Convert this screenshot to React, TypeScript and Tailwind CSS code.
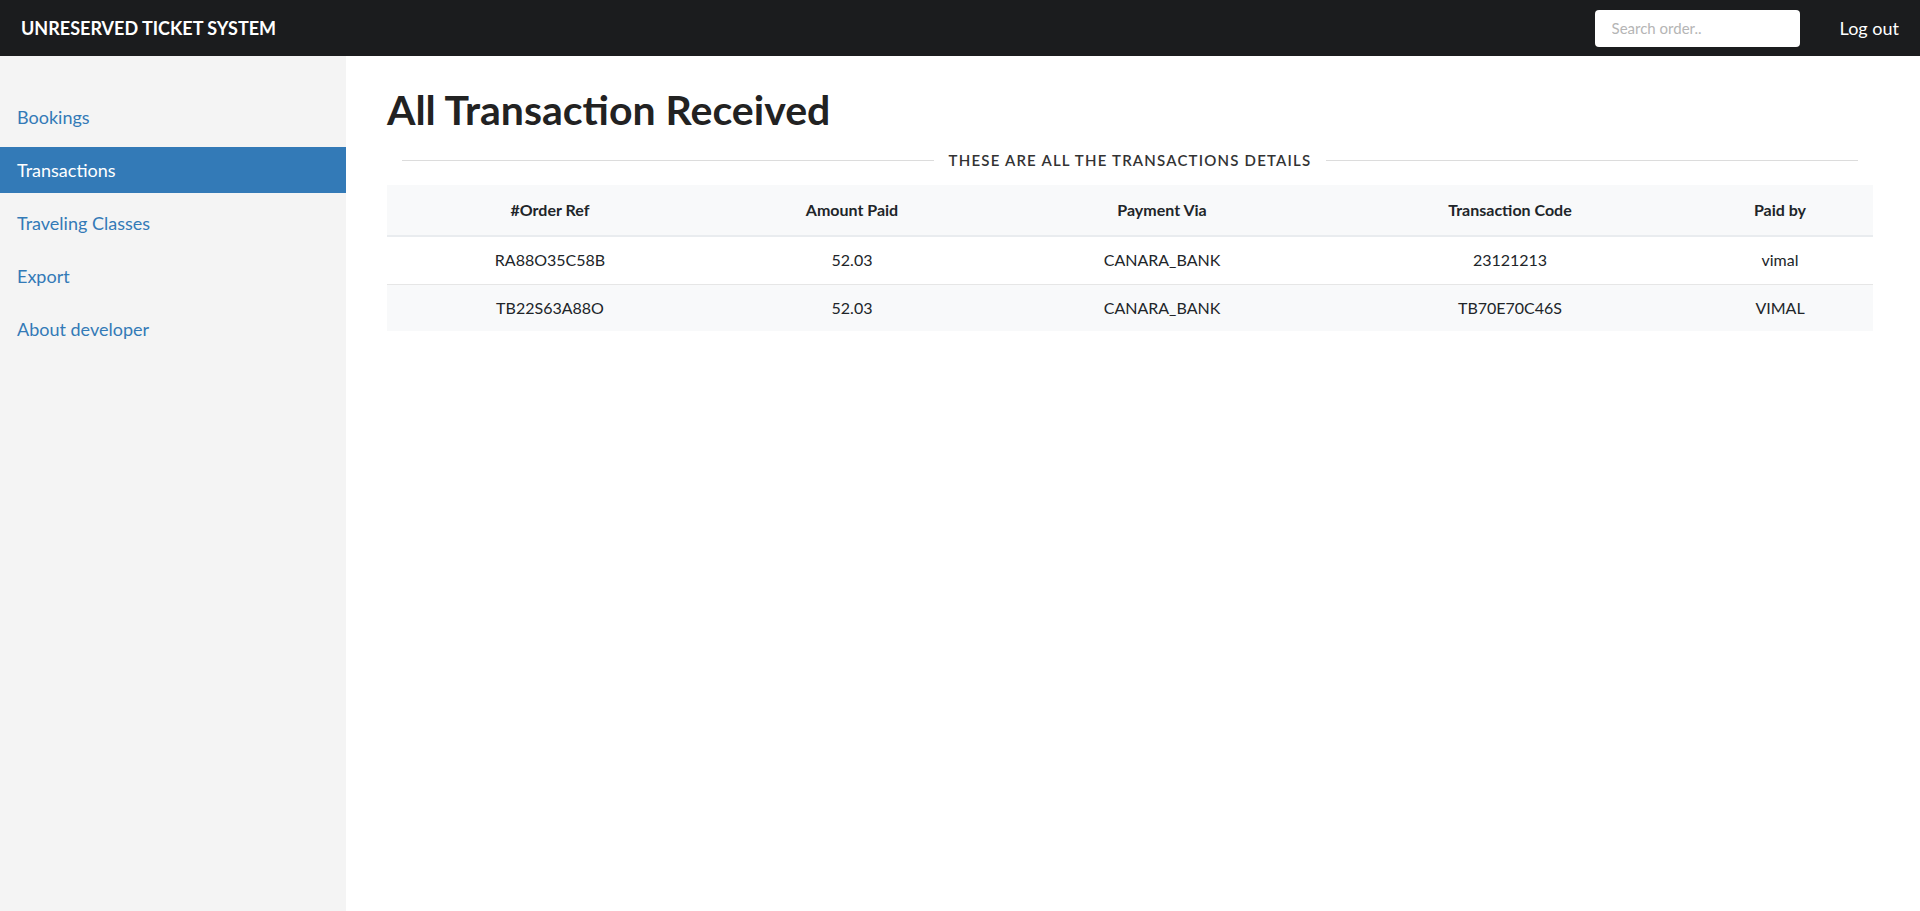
const navItems = ['Bookings', 'Transactions', 'Traveling Classes', 'Export', 'About developer']

const transactions = [
  { ref: 'RA88O35C58B', amount: '52.03', via: 'CANARA_BANK', code: '23121213', by: 'vimal' },
  { ref: 'TB22S63A88O', amount: '52.03', via: 'CANARA_BANK', code: 'TB70E70C46S', by: 'VIMAL' },
]

export default function App() {
  return (
    <div className="min-h-screen flex flex-col bg-white text-[#212529]" style={{ fontFamily: 'Lato, "Open Sans", sans-serif' }}>
      {/* top bar */}
      <header className="h-[56px] bg-[#1b1c1e] flex items-center justify-between pl-[21px] pr-[21px]">
        <span className="text-[18px] font-bold text-white">UNRESERVED TICKET SYSTEM</span>
        <div className="flex items-center gap-[40px]">
          <input
            type="text"
            placeholder="Search order.."
            className="w-[205px] h-[37px] rounded-[4px] bg-white px-[17px] text-[15px] text-gray-700 placeholder:text-[#b5b5b5] outline-none"
          />
          <span className="text-[18px] text-white">Log out</span>
        </div>
      </header>

      <div className="flex flex-1">
        {/* sidebar */}
        <aside className="w-[346px] bg-[#f4f4f4] pt-[38px] flex flex-col gap-[7px] min-h-[855px]">
          {navItems.map((item) => (
            <div
              key={item}
              className={
                item === 'Transactions'
                  ? 'h-[46px] flex items-center px-[17px] text-[18px] bg-[#337ab7] text-white'
                  : 'h-[46px] flex items-center px-[17px] text-[18px] text-[#337ab7]'
              }
            >
              {item}
            </div>
          ))}
        </aside>

        {/* main */}
        <main className="flex-1 pl-[41px] pr-[47px] pt-[30px]">
          <h1 className="text-[41px] leading-[48px] font-bold text-[#222]">All Transaction Received</h1>

          <div className="flex items-center gap-[15px] px-[15px] mt-[15px] h-[22px]">
            <div className="flex-1 h-px bg-[#dcdcdc]" />
            <span className="text-[15px] font-semibold tracking-[1.2px] text-[#333]">THESE ARE ALL THE TRANSACTIONS DETAILS</span>
            <div className="flex-1 h-px bg-[#dcdcdc]" />
          </div>

          <table className="w-full mt-[14px] text-[16px] text-center border-collapse">
            <thead>
              <tr className="bg-[#f8f9fa] h-[51px] border-b-2 border-[#e9ecef]">
                <th className="w-[326px] font-bold">#Order Ref</th>
                <th className="w-[278px] font-bold">Amount Paid</th>
                <th className="w-[342px] font-bold">Payment Via</th>
                <th className="w-[354px] font-bold">Transaction Code</th>
                <th className="w-[186px] font-bold">Paid by</th>
              </tr>
            </thead>
            <tbody>
              {transactions.map((t, i) => (
                <tr
                  key={t.ref}
                  className={i % 2 === 1 ? 'bg-[#f8f9fa] h-[47px]' : 'bg-white h-[48px] border-b border-[#e6e6e6]'}
                >
                  <td>{t.ref}</td>
                  <td>{t.amount}</td>
                  <td>{t.via}</td>
                  <td>{t.code}</td>
                  <td>{t.by}</td>
                </tr>
              ))}
            </tbody>
          </table>
        </main>
      </div>
    </div>
  )
}
